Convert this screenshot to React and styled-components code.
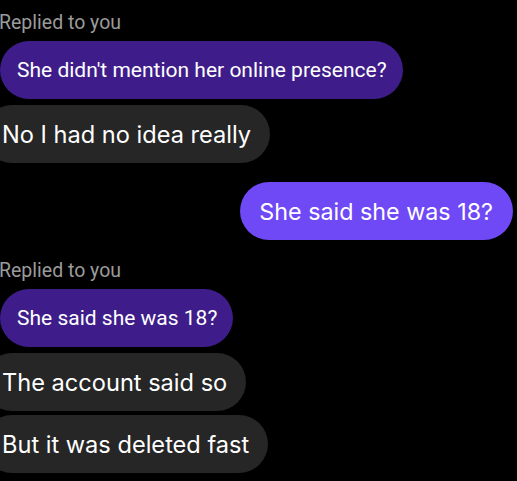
import React from 'react'
import styled, { createGlobalStyle } from 'styled-components'

// dm thread: replies, received and sent bubbles

const Global = createGlobalStyle`
    html, body {
        margin: 0;
        background: #000;
    }
`;

const Thread = styled.div`
    width: 517px;
    height: 481px;
    overflow: hidden;
    display: flex;
    flex-direction: column;
    align-items: flex-start;
    padding: 10px 4px 0 0;
    box-sizing: border-box;
`;

const ReplyLabel = styled.div`
    font-family: Roboto, sans-serif;
    font-size: 19.5px;
    line-height: 25px;
    color: #9b9b9b;
    margin-left: -1px;
    margin-top: ${p => p.$top || 0}px;
`;

const Bubble = styled.div`
    height: 58px;
    border-radius: 29px;
    display: flex;
    align-items: center;
    white-space: nowrap;
    color: #fff;
    flex-shrink: 0;
    margin-top: ${p => p.$top || 0}px;
`;

const Quoted = styled(Bubble)`
    background: #3e1d8b;
    font-family: Roboto, sans-serif;
    font-size: 21px;
    padding: 0 16px 0 17px;
`;

const Received = styled(Bubble)`
    background: #262626;
    font-family: Inter, sans-serif;
    font-size: 23.6px;
    padding: 0 19px 0 19px;
    margin-left: -17px;
`;

const Sent = styled(Bubble)`
    align-self: flex-end;
    background: #6f49f5;
    font-family: Inter, sans-serif;
    font-size: 23.3px;
    padding: 0 20px 0 19px;
`;

const App = () => {
    return (
        <Thread>
            <Global />
            <ReplyLabel>Replied to you</ReplyLabel>
            <Quoted $top={6}>She didn't mention her online presence?</Quoted>
            <Received $top={6}>No I had no idea really</Received>
            <Sent $top={19}>She said she was 18?</Sent>
            <ReplyLabel $top={18}>Replied to you</ReplyLabel>
            <Quoted $top={6}>She said she was 18?</Quoted>
            <Received $top={6}>The account said so</Received>
            <Received $top={4}>But it was deleted fast</Received>
        </Thread>
    )
}

export default App;
